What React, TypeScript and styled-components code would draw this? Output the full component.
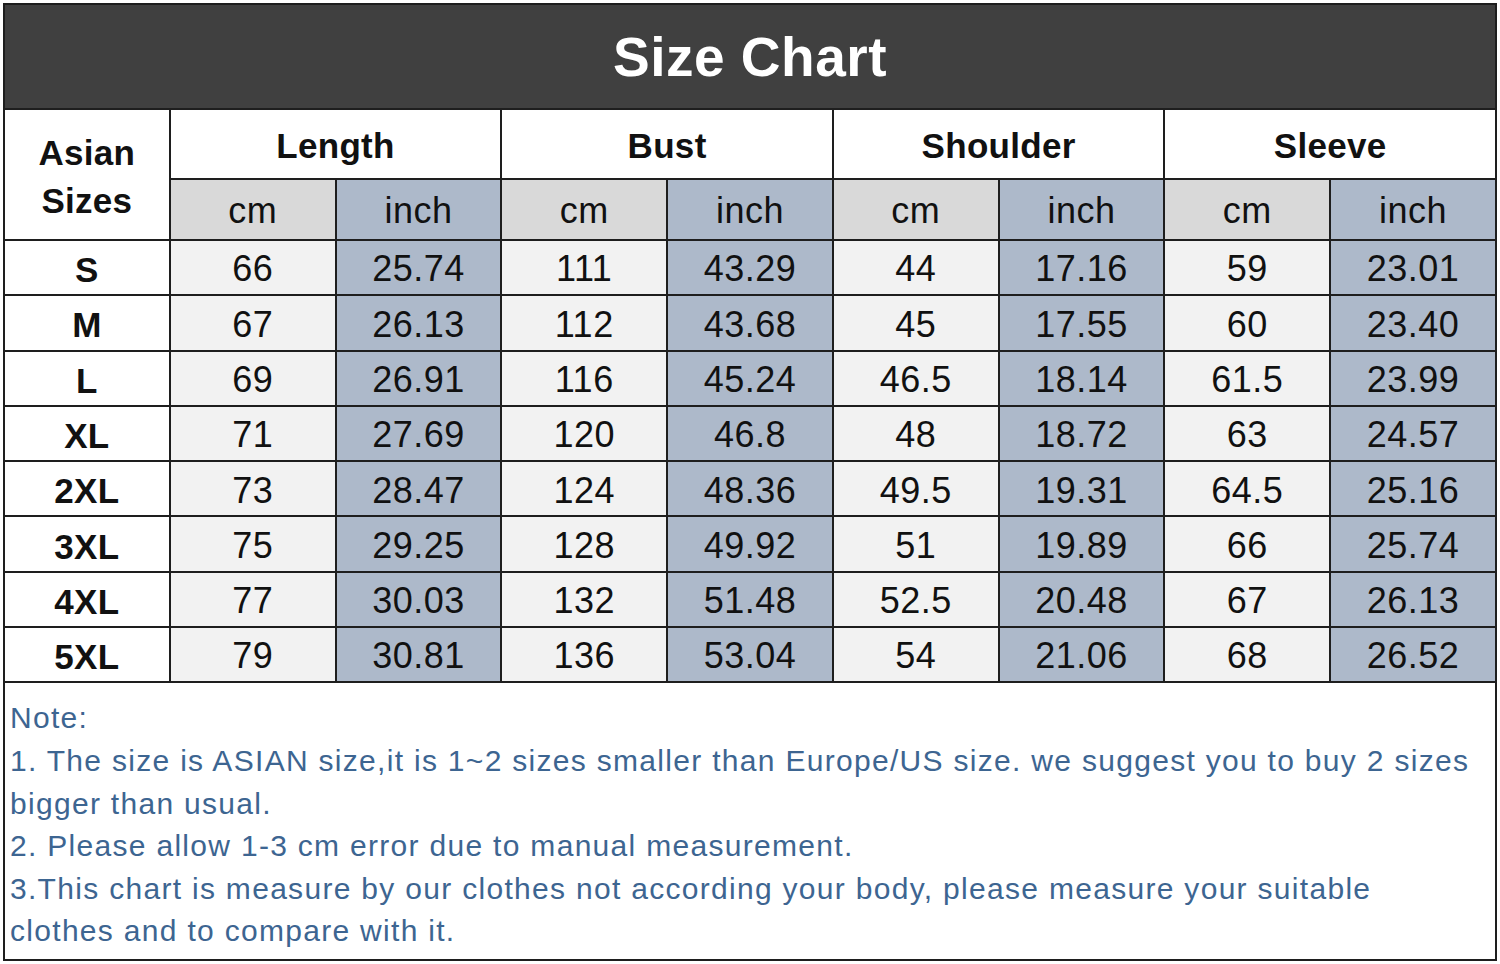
import React from 'react'
import styled, { createGlobalStyle } from 'styled-components'

const GlobalStyle = createGlobalStyle`
body {
  margin: 0;
  background: #ffffff;
  font-family: "Liberation Sans", Arial, sans-serif;
}
`

const Page = styled.div`
padding: 3px 2px 2px 3px;
width: 1500px;
box-sizing: border-box;
`

const Chart = styled.div`
width: 1494px;
border: 2px solid #1e1e1e;
box-sizing: border-box;
background: #ffffff;
`

const TitleBar = styled.div`
height: 103px;
background: #404040;
color: #ffffff;
display: flex;
align-items: center;
justify-content: center;
font-size: 55px;
font-weight: bold;
letter-spacing: 0.5px;
border-bottom: 2px solid #1e1e1e;
`

const Grid = styled.div`
display: grid;
grid-template-columns: repeat(9, 1fr);
grid-template-rows: 68px 59px repeat(8, 53.3px);
gap: 2px;
background: #1e1e1e;
border-bottom: 2px solid #1e1e1e;
`

const Cell = styled.div<{ $bg?: string; $bold?: boolean; $span?: number; $rows?: number }>`
background: ${p => p.$bg || '#ffffff'};
display: flex;
align-items: center;
justify-content: center;
text-align: center;
box-sizing: border-box;
padding-top: 4px;
color: #111111;
font-size: ${p => (p.$bold ? '35px' : '36px')};
font-weight: ${p => (p.$bold ? 'bold' : 'normal')};
letter-spacing: ${p => (p.$bold ? '0.3px' : '0.5px')};
line-height: 1.35;
grid-column: span ${p => p.$span || 1};
grid-row: span ${p => p.$rows || 1};
`

const Notes = styled.div`
height: 276px;
box-sizing: border-box;
padding: 14px 16px 0 5px;
color: #3d6591;
font-size: 30px;
line-height: 42.6px;
letter-spacing: 1.3px;
`

const NoteLine = styled.div``

const CM_HEAD = '#d9d9d9'
const INCH = '#adb9ca'
const CM_DATA = '#f2f2f2'

const groups = ['Length', 'Bust', 'Shoulder', 'Sleeve']

const rows: [string, string[]][] = [
  ['S', ['66', '25.74', '111', '43.29', '44', '17.16', '59', '23.01']],
  ['M', ['67', '26.13', '112', '43.68', '45', '17.55', '60', '23.40']],
  ['L', ['69', '26.91', '116', '45.24', '46.5', '18.14', '61.5', '23.99']],
  ['XL', ['71', '27.69', '120', '46.8', '48', '18.72', '63', '24.57']],
  ['2XL', ['73', '28.47', '124', '48.36', '49.5', '19.31', '64.5', '25.16']],
  ['3XL', ['75', '29.25', '128', '49.92', '51', '19.89', '66', '25.74']],
  ['4XL', ['77', '30.03', '132', '51.48', '52.5', '20.48', '67', '26.13']],
  ['5XL', ['79', '30.81', '136', '53.04', '54', '21.06', '68', '26.52']],
]

const App = () => {
  return (
    <Page>
      <GlobalStyle />
      <Chart>
        <TitleBar>Size Chart</TitleBar>
        <Grid>
          <Cell $bold $rows={2}>Asian<br />Sizes</Cell>
          {groups.map(g => (
            <Cell key={g} $bold $span={2}>{g}</Cell>
          ))}
          {groups.map(g => (
            <React.Fragment key={g + '-u'}>
              <Cell $bg={CM_HEAD}>cm</Cell>
              <Cell $bg={INCH}>inch</Cell>
            </React.Fragment>
          ))}
          {rows.map(([size, vals]) => (
            <React.Fragment key={size}>
              <Cell $bold>{size}</Cell>
              {vals.map((v, i) => (
                <Cell key={i} $bg={i % 2 === 0 ? CM_DATA : INCH}>{v}</Cell>
              ))}
            </React.Fragment>
          ))}
        </Grid>
        <Notes>
          <NoteLine>Note:</NoteLine>
          <NoteLine>1. The size is ASIAN size,it is 1~2 sizes smaller than Europe/US size. we suggest you to buy 2 sizes bigger than usual.</NoteLine>
          <NoteLine>2. Please allow 1-3 cm error due to manual measurement.</NoteLine>
          <NoteLine>3.This chart is measure by our clothes not according your body, please measure your suitable clothes and to compare with it.</NoteLine>
        </Notes>
      </Chart>
    </Page>
  )
}

export default App
